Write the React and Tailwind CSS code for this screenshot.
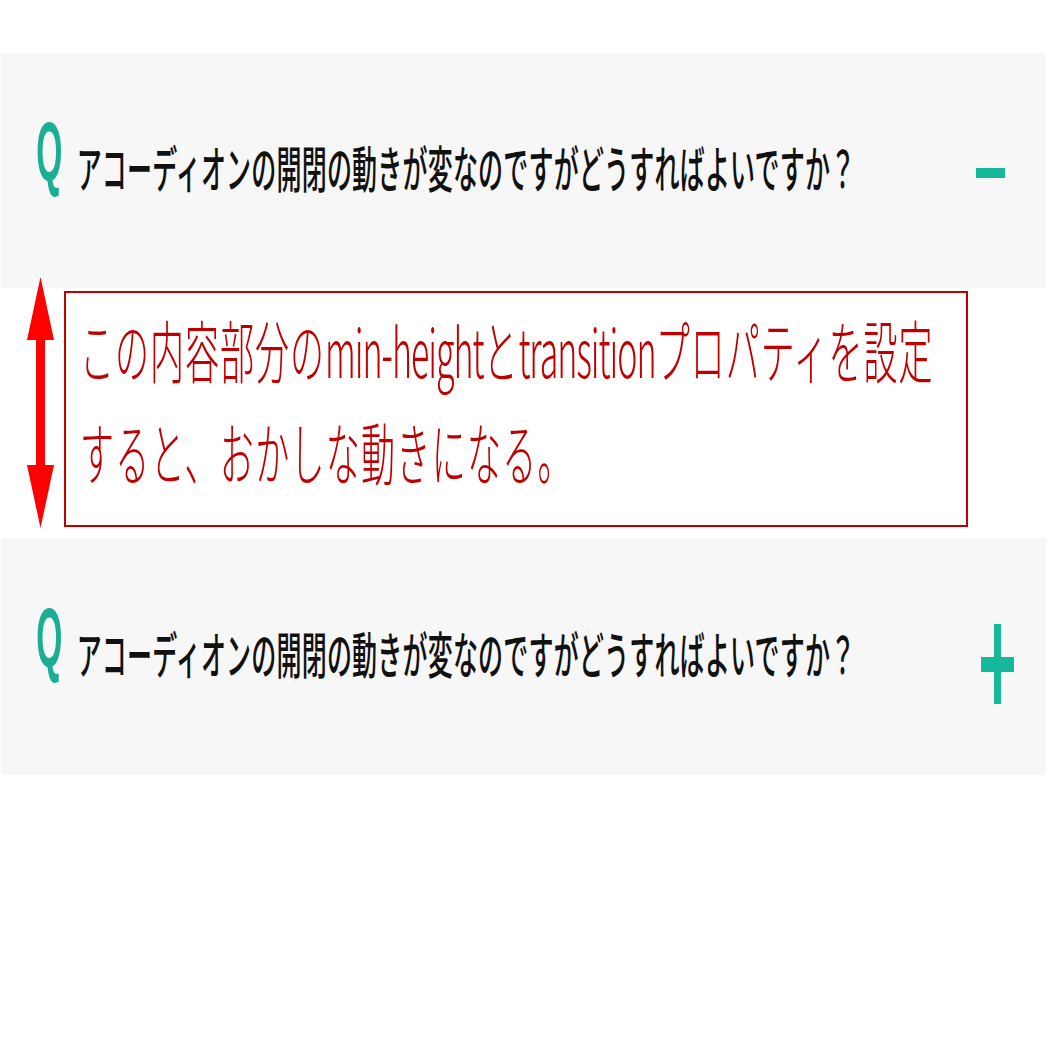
export default function App() {
  const jp = { fontFamily: '"Noto Sans CJK JP", "Noto Sans", sans-serif' };
  const Question = ({ icon, iconClass }) => (
    <div className="flex items-center h-full pl-[32px]">
      <span
        className="inline-block text-[42px] font-bold leading-none text-[#1aae96] scale-x-[0.8] scale-y-[2] mb-[36px]"
        style={{ fontFamily: '"Liberation Sans", Arial, sans-serif' }}
      >
        Q
      </span>
      <span
        className="inline-block ml-[11px] text-[25px] font-medium leading-none text-[#111] scale-y-[2] mb-[8px] tracking-[0.2px]"
        style={jp}
      >
        アコーディオンの開閉の動きが変なのですがどうすればよいですか？
      </span>
      <div className={"ml-auto flex items-center " + iconClass}>{icon}</div>
    </div>
  );

  return (
    <div className="w-[1056px] h-[1056px] bg-white pt-[53px] overflow-hidden">
      <div className="ml-[1px] w-[1045px] h-[235px] bg-[#f7f7f7]">
        <Question
          iconClass="mr-[41px]"
          icon={
            <svg width="29" height="10" viewBox="0 0 29 10" className="mt-[4px]">
              <rect x="0" y="0" width="29" height="10" fill="#17b79c" />
            </svg>
          }
        />
      </div>
      <div className="flex h-[250px]">
        <svg
          width="27"
          height="251"
          viewBox="0 0 27 251"
          className="ml-[27px] -mt-[11px] shrink-0"
        >
          <polygon
            points="13.5,0 27,63 18,63 18,188 27,188 13.5,251 0,188 9,188 9,63 0,63"
            fill="#ff0000"
          />
        </svg>
        <div className="ml-[10px] mt-[3px] w-[904px] h-[236px] border-2 border-[#c00000] bg-white pl-[14px] pt-[5px]">
          <div
            className="inline-block origin-top-left scale-y-[2] text-[34px] leading-[51px] font-light text-[#c00000] whitespace-nowrap tracking-[1px]"
            style={jp}
          >
            <div>
              この内容部分の<span className="tracking-[-1px]">min-height</span>と
              <span className="tracking-[-1px]">transition</span>プロパティを設定
            </div>
            <div className="tracking-[1.3px]">すると、おかしな動きになる。</div>
          </div>
        </div>
      </div>
      <div className="ml-[1px] w-[1045px] h-[237px] bg-[#f7f7f7]">
        <Question
          iconClass="mr-[32px]"
          icon={
            <svg width="33" height="80" viewBox="0 0 33 80" className="mt-[14px]">
              <rect x="13" y="0" width="7" height="80" fill="#17b79c" />
              <rect x="0" y="33" width="33" height="15" fill="#17b79c" />
            </svg>
          }
        />
      </div>
    </div>
  );
}
